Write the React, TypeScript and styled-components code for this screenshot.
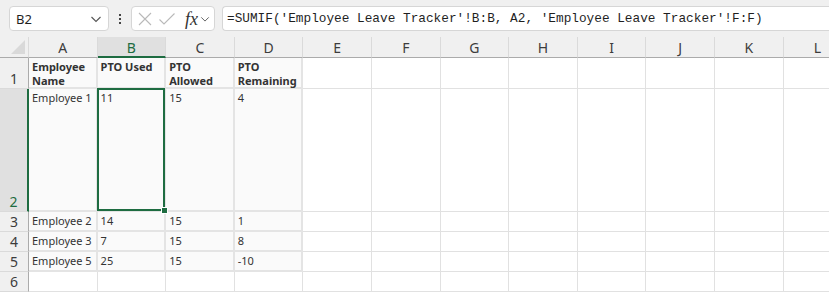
import React from 'react'
import styled, { createGlobalStyle, css } from 'styled-components'

const GREEN = '#1e6c41'
const UI_FONT = '"Noto Sans", "Open Sans", sans-serif'

const GlobalStyle = createGlobalStyle`
  html, body {
    margin: 0;
    padding: 0;
    background: #f0f0f0;
    overflow: hidden;
  }
  * {
    box-sizing: border-box;
  }
`

const COLUMNS = ['A', 'B', 'C', 'D', 'E', 'F', 'G', 'H', 'I', 'J', 'K', 'L']
const ROW_HEIGHTS = [31, 123, 20, 20, 20, 20]

const TABLE: string[][] = [
  ['Employee Name', 'PTO Used', 'PTO Allowed', 'PTO Remaining'],
  ['Employee 1', '11', '15', '4'],
  ['Employee 2', '14', '15', '1'],
  ['Employee 3', '7', '15', '8'],
  ['Employee 5', '25', '15', '-10'],
]

const SELECTED = { row: 1, col: 1 }

const App: React.FC = () => {
  return (
    <>
      <GlobalStyle />
      <Page>
        <FormulaBar>
          <NameBox>
            <span>B2</span>
            <Chevron size={12} />
          </NameBox>
          <Dots>
            <i />
            <i />
            <i />
          </Dots>
          <ActionBox>
            <svg width="16" height="16" viewBox="0 0 16 16">
              <path d="M2 2 L14 14 M14 2 L2 14" stroke="#b9b9b9" strokeWidth="1.1" fill="none" />
            </svg>
            <svg width="18" height="16" viewBox="0 0 18 16">
              <path d="M1.5 8.5 L6 13 L16.5 2.5" stroke="#b9b9b9" strokeWidth="1.1" fill="none" />
            </svg>
            <FxLabel>fx</FxLabel>
            <Chevron size={10} />
          </ActionBox>
          <FormulaInput>
            =SUMIF('Employee Leave Tracker'!B:B, A2, 'Employee Leave Tracker'!F:F)
          </FormulaInput>
        </FormulaBar>

        <Sheet>
          <Corner>
            <svg width="14" height="14" viewBox="0 0 14 14">
              <path d="M14 0 L14 14 L0 14 Z" fill="#d9d9d9" />
            </svg>
          </Corner>
          {COLUMNS.map((c, i) => (
            <ColHeader key={c} $active={i === SELECTED.col}>
              {c}
            </ColHeader>
          ))}

          {ROW_HEIGHTS.map((h, r) => (
            <React.Fragment key={r}>
              <RowHeader $active={r === SELECTED.row} style={{ height: h }}>
                {r + 1}
              </RowHeader>
              {COLUMNS.map((c, ci) => {
                const value = TABLE[r]?.[ci]
                const inTable = r < TABLE.length && ci < 4
                return (
                  <Cell
                    key={c}
                    $filled={inTable}
                    $bold={r === 0 && inTable}
                    style={{ height: h }}
                  >
                    {value}
                    {r === SELECTED.row && ci === SELECTED.col && (
                      <Selection>
                        <Handle />
                      </Selection>
                    )}
                  </Cell>
                )
              })}
            </React.Fragment>
          ))}
        </Sheet>
      </Page>
    </>
  )
}

const Chevron: React.FC<{ size: number }> = ({ size }) => (
  <svg width={size} height={size} viewBox="0 0 12 12">
    <path d="M1.5 4 L6 8.5 L10.5 4" stroke="#555" strokeWidth="1.1" fill="none" />
  </svg>
)

const Page = styled.div`
  width: 829px;
  height: 292px;
  overflow: hidden;
  background: #f0f0f0;
`

const FormulaBar = styled.div`
  display: flex;
  align-items: center;
  height: 37px;
  padding: 4px 0 4px 9px;
`

const boxBase = css`
  height: 25px;
  background: #fff;
  border: 1px solid #d6d6d6;
  border-radius: 4px;
  display: flex;
  align-items: center;
`

const NameBox = styled.div`
  ${boxBase};
  width: 100px;
  justify-content: space-between;
  padding: 0 6px;
  font-family: ${UI_FONT};
  font-size: 13px;
  color: #1f1f1f;
`

const Dots = styled.div`
  width: 22px;
  display: flex;
  flex-direction: column;
  align-items: center;
  gap: 2px;

  i {
    display: block;
    width: 2px;
    height: 2px;
    background: #444;
  }
`

const ActionBox = styled.div`
  ${boxBase};
  width: 84px;
  padding: 0 4px 0 5px;
  gap: 5px;
  svg:last-child {
    margin-left: -3px;
  }
`

const FxLabel = styled.span`
  font-family: "Liberation Serif", serif;
  font-style: italic;
  font-size: 18px;
  color: #333;
  margin-left: 4px;
  line-height: 1;
`

const FormulaInput = styled.div`
  ${boxBase};
  flex: 1;
  margin-left: 7px;
  border-right: none;
  border-radius: 4px 0 0 4px;
  padding-left: 4px;
  font-family: "Liberation Mono", monospace;
  font-size: 12.75px;
  color: #1f1f1f;
  white-space: nowrap;
  overflow: hidden;
`

const Sheet = styled.div`
  display: grid;
  grid-template-columns: 29px repeat(12, 68.6px);
  background: #fff;
`

const Corner = styled.div`
  height: 21px;
  background: #f0f0f0;
  border-right: 1px solid #dadada;
  border-bottom: 1px solid #ababab;
  display: flex;
  align-items: flex-end;
  justify-content: flex-end;
  padding: 0 3px 3px 0;
`

const ColHeader = styled.div<{ $active: boolean }>`
  height: 21px;
  display: flex;
  align-items: center;
  justify-content: center;
  font-family: ${UI_FONT};
  font-size: 14px;
  color: ${(p) => (p.$active ? GREEN : '#3c3c3c')};
  background: ${(p) => (p.$active ? '#e0e0e0' : '#f0f0f0')};
  border-right: 1px solid #dadada;
  border-bottom: ${(p) => (p.$active ? `2px solid ${GREEN}` : '1px solid #ababab')};
  padding-top: ${(p) => (p.$active ? '1px' : '0')};
`

const RowHeader = styled.div<{ $active: boolean }>`
  display: flex;
  align-items: flex-end;
  justify-content: center;
  font-family: ${UI_FONT};
  font-size: 14px;
  line-height: 19px;
  color: ${(p) => (p.$active ? GREEN : '#3c3c3c')};
  background: ${(p) => (p.$active ? '#e0e0e0' : '#f0f0f0')};
  border-bottom: 1px solid #dadada;
  border-right: ${(p) => (p.$active ? `2px solid ${GREEN}` : '1px solid #ababab')};
`

const Cell = styled.div<{ $filled: boolean; $bold: boolean }>`
  position: relative;
  padding: 2px 3px 0 3px;
  font-family: ${UI_FONT};
  font-size: 11px;
  line-height: 14px;
  color: #333;
  font-weight: ${(p) => (p.$bold ? 700 : 400)};
  background: ${(p) => (p.$filled ? '#fafafa' : '#fff')};
  border-right: ${(p) => (p.$filled ? '2px solid #e4e4e4' : '1px solid #e1e1e1')};
  border-bottom: ${(p) => (p.$filled ? '2px solid #e4e4e4' : '1px solid #e1e1e1')};
`

const Selection = styled.div`
  position: absolute;
  inset: -1px;
  border: 2px solid ${GREEN};
  pointer-events: none;
  z-index: 2;
`

const Handle = styled.div`
  position: absolute;
  right: -5px;
  bottom: -5px;
  width: 7px;
  height: 7px;
  background: ${GREEN};
  border: 1px solid #fff;
`

export default App
